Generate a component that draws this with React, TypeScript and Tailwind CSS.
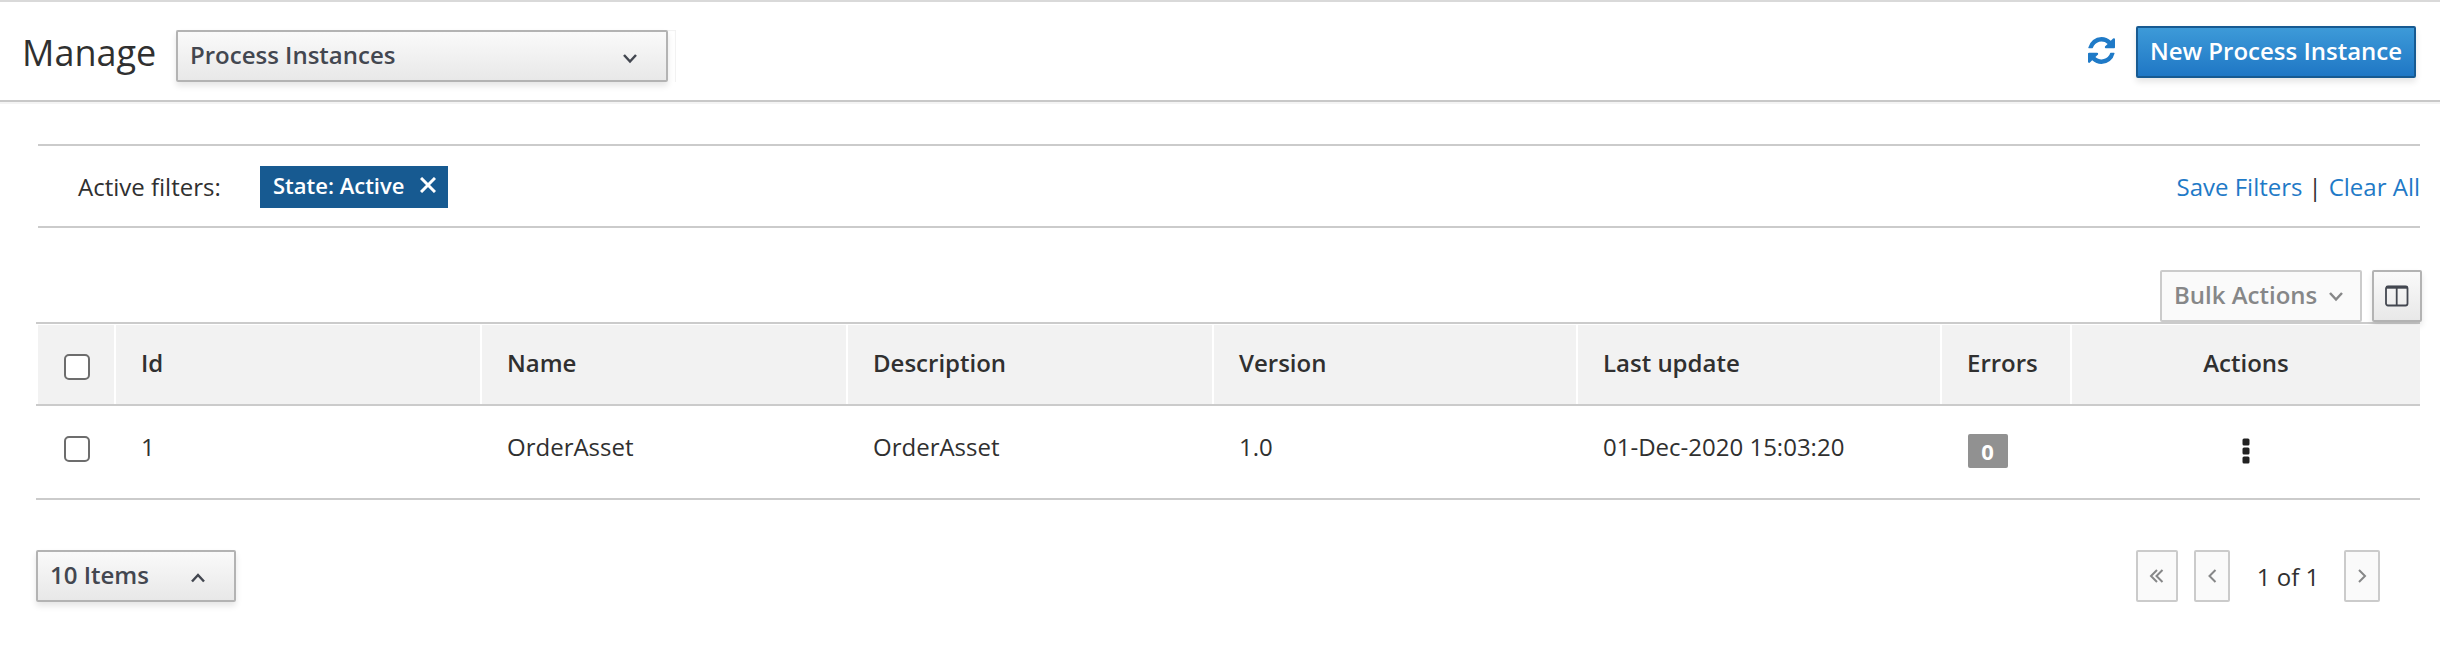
import type { ReactNode } from 'react';

const raised =
  'rounded-[2px] border-2 border-[#b3b3b3] bg-gradient-to-b from-[#fafafa] to-[#e8e8e8] text-[#434750] shadow-[0_4px_6px_rgba(3,3,3,0.1)]';
const disabled = 'rounded-[2px] border-2 border-[#cbcbcb] bg-[#fafafa] text-[#868788]';

function Chevron({ dir, className = '' }: { dir: 'down' | 'up' | 'left' | 'right' | 'double'; className?: string }) {
  const paths = {
    down: 'M2 5 8 11.5 14 5',
    up: 'M2 11.5 8 5 14 11.5',
    left: 'M11.500 2 5.500 8 11.500 14',
    right: 'M5 2 11 8 5 14',
    double: 'M8 2 2 8 8 14M13.5 2 7.5 8 13.5 14',
  };
  const weight = dir === 'down' || dir === 'up' ? 2.5 : 2;
  return (
    <svg viewBox="0 0 16 16" className={`h-4 w-4 shrink-0 ${className}`} fill="none" stroke="currentColor" strokeWidth={weight}>
      <path d={paths[dir]} />
    </svg>
  );
}

function RefreshIcon() {
  return (
    <svg viewBox="0 0 1536 1536" className="h-[27px] w-[27px] shrink-0" fill="#1f7ac7">
      <path d="M1511 928q0 5-1 7-64 268-268 434.500T764 1536q-146 0-282.500-55T238 1324l-129 129q-19 19-45 19t-45-19-19-45V960q0-26 19-45t45-19h448q26 0 45 19t19 45-19 45l-137 137q71 66 161 102t187 36q134 0 250-65t186-179q11-17 53-117 8-23 30-23h192q13 0 22.500 9.500t9.500 22.500zm25-800v448q0 26-19 45t-45 19h-448q-26 0-45-19t-19-45 19-45l138-138Q969 256 768 256q-134 0-250 65T332 500q-11 17-53 117-8 23-30 23H50q-13 0-22.500-9.500T18 608v-7q65-268 270-434.500T768 0q146 0 284 55.500T1297 212l130-129q19-19 45-19t45 19 19 45z" />
    </svg>
  );
}

function ColumnsIcon() {
  return (
    <svg viewBox="0 0 24 22" className="h-[22px] w-6" fill="none" stroke="#434750">
      <rect x="1" y="1.500" width="21.500" height="19" rx="2" strokeWidth="1.800" />
      <path d="M1 2.300H22.500" strokeWidth="2.800" />
      <path d="M11.700 2V20.500" strokeWidth="1.800" />
    </svg>
  );
}

function Checkbox() {
  return (
    <input
      type="checkbox"
      className="block h-[26px] w-[26px] appearance-none rounded-[5px] border-2 border-[#6d6d6d] bg-white"
    />
  );
}

function HeadCell({ children, className = 'pl-[25px]' }: { children?: ReactNode; className?: string }) {
  return <div className={`flex h-[79px] bg-[#f2f2f2] pt-[22px] font-semibold leading-8 ${className}`}>{children}</div>;
}

const grid = 'grid grid-cols-[76px_364px_364px_364px_362px_362px_128px_1fr] gap-x-[2px]';

export default function App() {
  return (
    <div className="h-[670px] w-[2440px] overflow-hidden bg-white font-['Open_Sans','Noto_Sans',sans-serif] text-[24px] leading-8 text-[#303030]">
      <header className="flex h-[102px] items-start border-t-2 border-b-2 border-t-[#d9d9d9] border-b-[#c8c8c8] pr-6 pl-[22px] shadow-[0_2px_0_#f4f4f4]">
        <h1 className="mt-[27px] w-[154px] text-[36px] leading-[48px]">Manage</h1>
        <div className="mt-7 h-[52px] w-[500px] shadow-[inset_-1px_1px_1px_rgba(3,3,3,0.06)]">
          <button className={`flex h-[52px] w-[492px] items-center justify-between pr-7 pb-[2px] pl-[12px] font-semibold ${raised}`}>
            Process Instances
            <Chevron dir="down" className="mt-[5px]" />
          </button>
        </div>
        <div className="ml-auto flex">
          <a className="mt-[35px] mr-[21px] block">
            <RefreshIcon />
          </a>
          <button className="mt-6 h-[52px] w-[280px] rounded-[2px] border-2 border-[#175a91] bg-gradient-to-b from-[#3d9ad8] to-[#1f77c5] pb-[2px] text-center font-semibold whitespace-nowrap text-white shadow-[0_4px_6px_rgba(3,3,3,0.1)]">
            New Process Instance
          </button>
        </div>
      </header>

      <section className="mt-[42px] mr-5 ml-[38px] flex h-[84px] items-start border-y-2 border-[#cbcbcb]">
        <span className="mt-[25px] ml-10 w-[182px]">Active filters:</span>
        <span className="mt-5 flex h-[42px] w-[188px] bg-[#175a91] pl-[13px] text-[22px] leading-[38px] font-semibold text-white">
          State: Active
          <svg viewBox="0 0 16 16" className="mt-[11px] ml-4 h-4 w-4" stroke="white" strokeWidth="3">
            <path d="M1 1 15 15M15 1 1 15" />
          </svg>
        </span>
        <span className="mt-[25px] ml-auto">
          <a className="text-[#1f7ac7]">Save Filters</a>
          <span className="mr-[7px] ml-[6px]">|</span>
          <a className="text-[#1f7ac7]">Clear All</a>
        </span>
      </section>

      <div className="mt-[42px] mr-[18px] flex h-[52px] justify-end gap-[10px]">
        <button className={`flex h-[52px] w-[202px] items-center justify-between pr-4 pb-[2px] pl-[12px] font-semibold ${disabled}`}>
          Bulk Actions
          <Chevron dir="down" className="mt-[2px]" />
        </button>
        <button className={`flex h-[52px] w-[50px] items-center justify-center ${raised}`}>
          <ColumnsIcon />
        </button>
      </div>

      <div className="mr-5 ml-9 border-y-2 border-[#cbcbcb]">
        <div className={`border-b-2 border-[#cbcbcb] pt-px pl-[2px] ${grid}`}>
          <HeadCell className="pt-[29px]! pl-[26px]">
            <Checkbox />
          </HeadCell>
          <HeadCell>Id</HeadCell>
          <HeadCell>Name</HeadCell>
          <HeadCell>Description</HeadCell>
          <HeadCell>Version</HeadCell>
          <HeadCell>Last update</HeadCell>
          <HeadCell>Errors</HeadCell>
          <HeadCell className="justify-center">Actions</HeadCell>
        </div>
        <div className={`h-[92px] pt-[25px] pl-[2px] *:pl-[25px] ${grid}`}>
          <div className="pt-[5px] pl-[26px]!">
            <Checkbox />
          </div>
          <div>1</div>
          <div>OrderAsset</div>
          <div>OrderAsset</div>
          <div>1.0</div>
          <div>01-Dec-2020 15:03:20</div>
          <div className="pl-[26px]!">
            <span className="mt-[3px] flex h-[34px] w-10 items-center justify-center rounded-[2px] bg-[#919191] pr-px text-[22px] font-bold text-white">
              0
            </span>
          </div>
          <div className="flex justify-center pt-[7px] pl-0!">
            <svg viewBox="0 0 8 26" className="h-[26px] w-2" fill="#222">
              <rect x="0.500" y="0.500" width="7" height="7" rx="1.500" />
              <rect x="0.500" y="9.500" width="7" height="7" rx="1.500" />
              <rect x="0.500" y="18.500" width="7" height="7" rx="1.500" />
            </svg>
          </div>
        </div>
      </div>

      <footer className="mt-[50px] mr-[60px] ml-9 flex h-[52px]">
        <button className={`mr-auto flex w-[200px] items-center justify-between pr-[28px] pb-[2px] pl-[12px] font-semibold ${raised}`}>
          10 Items
          <Chevron dir="up" className="mt-[5px]" />
        </button>
        <button className={`flex w-[42px] items-center justify-center ${disabled}`}>
          <Chevron dir="double" />
        </button>
        <button className={`ml-4 flex w-9 items-center justify-center ${disabled}`}>
          <Chevron dir="left" />
        </button>
        <span className="w-[114px] pt-[11px] pl-[2px] text-center">1 of 1</span>
        <button className={`flex w-9 items-center justify-center ${disabled}`}>
          <Chevron dir="right" />
        </button>
      </footer>
    </div>
  );
}
